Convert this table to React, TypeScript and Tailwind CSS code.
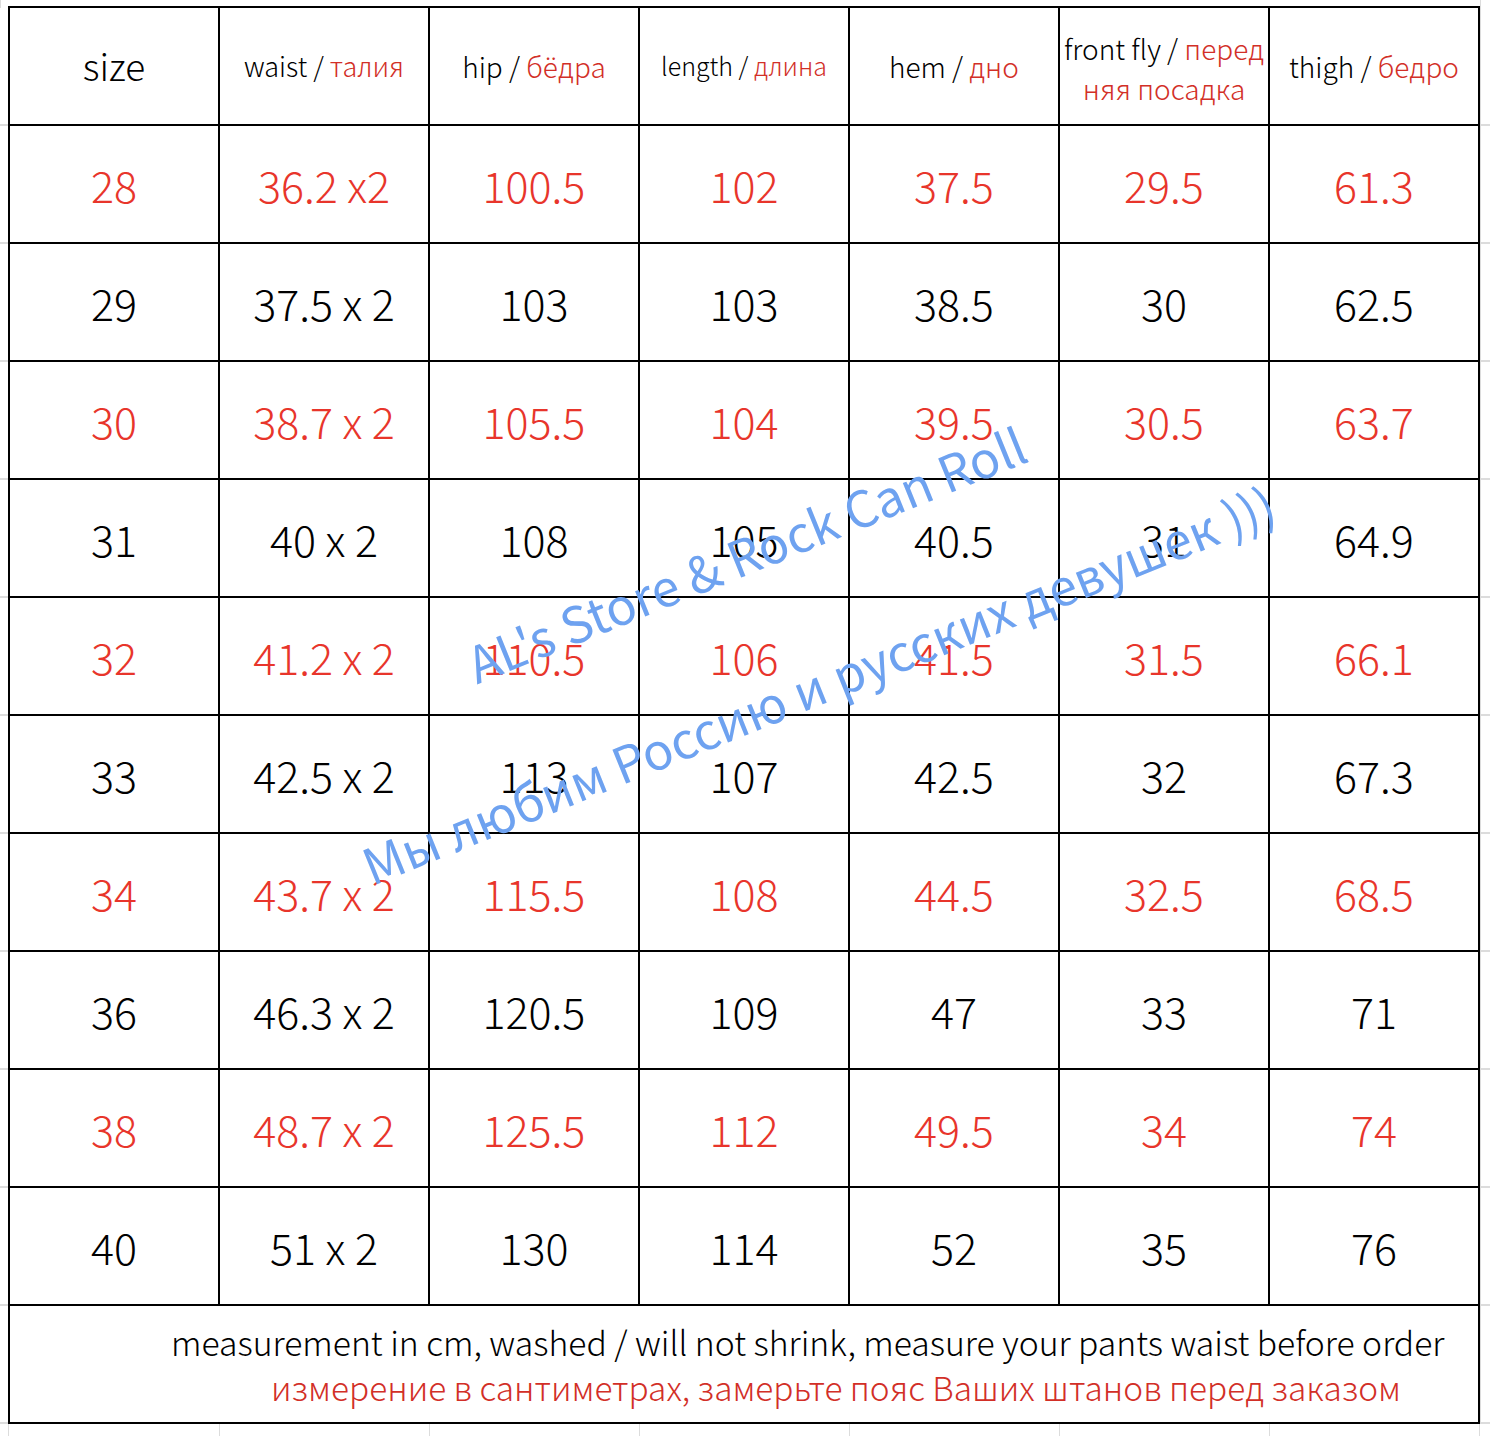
import React from "react";

const RED = "text-[#e8352b]";

const rows: { size: string; vals: string[]; red: boolean }[] = [
  { size: "28", vals: ["36.2 x2", "100.5", "102", "37.5", "29.5", "61.3"], red: true },
  { size: "29", vals: ["37.5 x 2", "103", "103", "38.5", "30", "62.5"], red: false },
  { size: "30", vals: ["38.7 x 2", "105.5", "104", "39.5", "30.5", "63.7"], red: true },
  { size: "31", vals: ["40 x 2", "108", "105", "40.5", "31", "64.9"], red: false },
  { size: "32", vals: ["41.2 x 2", "110.5", "106", "41.5", "31.5", "66.1"], red: true },
  { size: "33", vals: ["42.5 x 2", "113", "107", "42.5", "32", "67.3"], red: false },
  { size: "34", vals: ["43.7 x 2", "115.5", "108", "44.5", "32.5", "68.5"], red: true },
  { size: "36", vals: ["46.3 x 2", "120.5", "109", "47", "33", "71"], red: false },
  { size: "38", vals: ["48.7 x 2", "125.5", "112", "49.5", "34", "74"], red: true },
  { size: "40", vals: ["51 x 2", "130", "114", "52", "35", "76"], red: false },
];

const headers: { en: string; ru: string; cls: string }[] = [
  { en: "waist / ", ru: "талия", cls: "text-[27px]" },
  { en: "hip / ", ru: "бёдра", cls: "text-[28px]" },
  { en: "length / ", ru: "длина", cls: "text-[25px]" },
  { en: "hem / ", ru: "дно", cls: "text-[28px]" },
  { en: "", ru: "", cls: "" },
  { en: "thigh / ", ru: "бедро", cls: "text-[28px]" },
];

const Gutter = ({ right }: { right?: boolean }) => (
  <div className={`${right ? "w-[10px] border-l border-l-[#dcdcdc]" : "w-[8px]"} h-full flex flex-col justify-end`}>
    <div className="h-[2px] bg-[#dcdcdc]" />
  </div>
);

const Cell = ({ first, children }: { first?: boolean; children: React.ReactNode }) => (
  <div
    className={`${first ? "w-[212px] border-x-2" : "w-[210px] border-r-2"} h-full border-b-2 border-black flex items-center justify-center text-center`}
  >
    {children}
  </div>
);

export default function App() {
  return (
    <div className="relative w-[1490px] h-[1436px] bg-white overflow-hidden font-['Noto_Sans_CJK_SC','Noto_Sans',sans-serif] font-light text-black">
      {/* top strip */}
      <div className="flex h-[8px]">
        <div className="w-[8px] border-l border-l-[#dcdcdc]" />
        <div className="w-[1472px] flex flex-col justify-end">
          <div className="h-[2px] bg-black" />
        </div>
        <div className="w-[10px] border-l border-l-[#dcdcdc]" />
      </div>

      {/* header */}
      <div className="flex h-[118px]">
        <Gutter />
        <Cell first>
          <span className="text-[37px]">size</span>
        </Cell>
        {headers.map((h, i) =>
          i === 4 ? (
            <Cell key={i}>
              <div className="text-[28px] leading-[40px] mt-[3px] whitespace-nowrap">
                <div>
                  front fly / <span className="text-[#d22f27]">перед</span>
                </div>
                <div className="text-[#d22f27]">няя посадка</div>
              </div>
            </Cell>
          ) : (
            <Cell key={i}>
              <span className={`${h.cls} whitespace-nowrap`}>
                {h.en}
                <span className="text-[#d22f27]">{h.ru}</span>
              </span>
            </Cell>
          )
        )}
        <Gutter right />
      </div>

      {rows.map((r) => (
        <div key={r.size} className={`flex h-[118px] ${r.red ? RED : "text-black"}`}>
          <Gutter />
          <Cell first>
            <span className="text-[43px]">{r.size}</span>
          </Cell>
          {r.vals.map((v, i) => (
            <Cell key={i}>
              <span className="text-[43px] whitespace-nowrap">{v}</span>
            </Cell>
          ))}
          <Gutter right />
        </div>
      ))}

      {/* footer */}
      <div className="flex h-[118px]">
        <Gutter />
        <div className="w-[1472px] h-full border-x-2 border-b-2 border-black flex flex-col justify-center gap-[1px] text-[33.7px] leading-[44px]">
          <div className="pl-[161px] whitespace-nowrap">
            measurement in cm, washed / will not shrink, measure your pants waist before order
          </div>
          <div className="pl-[261px] whitespace-nowrap text-[#d22f27] text-[33.4px]">
            измерение в сантиметрах, замерьте пояс Ваших штанов перед заказом
          </div>
        </div>
        <Gutter right />
      </div>

      {/* bottom strip */}
      <div className="flex h-[12px]">
        <div className="w-[8px]" />
        {[0, 1, 2, 3, 4, 5, 6].map((i) => (
          <div
            key={i}
            className={`${i === 0 ? "w-[212px] border-x" : "w-[210px] border-r"} border-[#dcdcdc]`}
          />
        ))}
      </div>

      {/* watermark */}
      <div className="absolute left-[790px] top-[614px] -translate-x-1/2 -translate-y-1/2 rotate-[-22deg] flex flex-col items-center gap-[92px] whitespace-nowrap font-normal text-[50px] leading-[56px] text-[#6ea2f0]">
        <div className="mr-[36px]">AL's Store &amp; Rock Can Roll</div>
        <div>Мы любим Россию и русских девушек )))</div>
      </div>
    </div>
  );
}
